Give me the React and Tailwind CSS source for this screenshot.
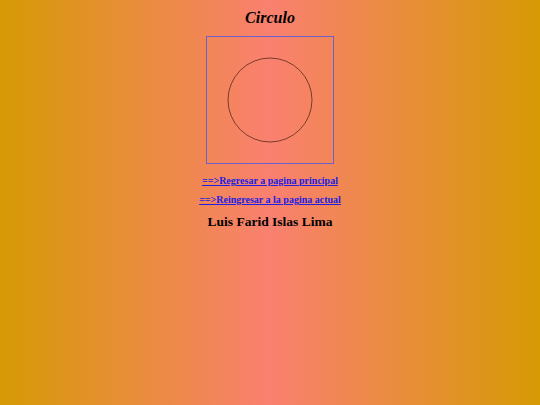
export default function App() {
  return (
    <div className="min-h-[405px] w-full bg-[linear-gradient(to_right,#d69a04,#fa8070_50%,#d69a04)] font-['Liberation_Serif',serif] text-black flex flex-col items-center">
      <h1 className="mt-[8px] text-[16px] leading-[20px] font-bold italic">Circulo</h1>
      <div className="mt-[8px] w-[128px] h-[128px] border border-[#6b5fc8] overflow-hidden">
        <svg className="block" width="126" height="126" viewBox="0 0 126 126">
          <circle cx="63" cy="63" r="42" fill="none" stroke="#5a2a1a" strokeWidth="0.8" />
        </svg>
      </div>
      <a href="#" className="mt-[10px] text-[10px] leading-[14px] font-bold text-[#2020e0] underline">==&gt;Regresar a pagina principal</a>
      <a href="#" className="mt-[5px] text-[10px] leading-[14px] font-bold text-[#2020e0] underline">==&gt;Reingresar a la pagina actual</a>
      <p className="mt-[6px] text-[13.5px] leading-[18px] font-bold">Luis Farid Islas Lima</p>
    </div>
  )
}
